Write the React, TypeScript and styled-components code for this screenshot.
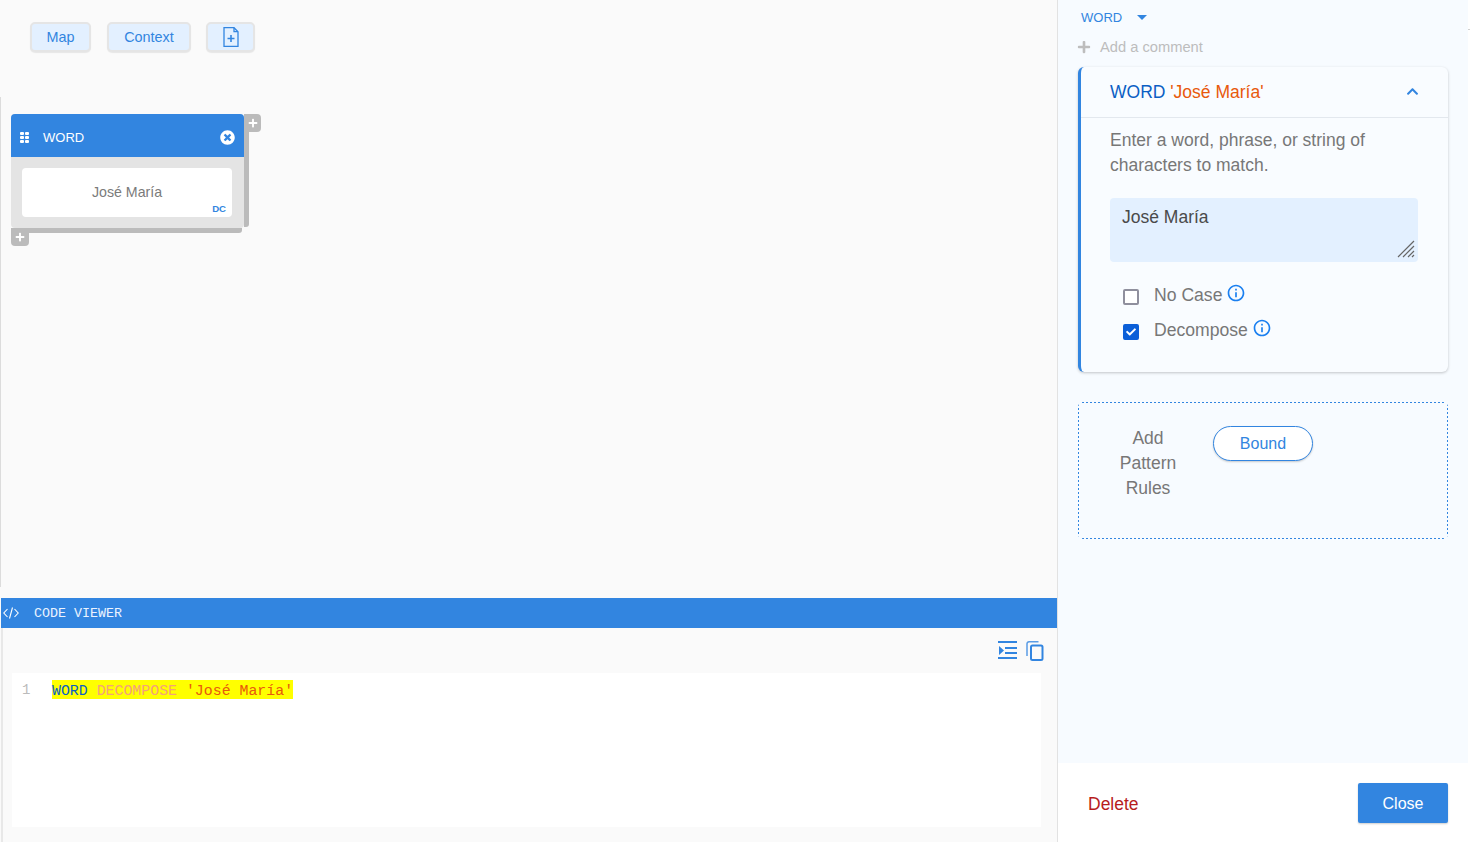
import React, { ReactElement } from 'react'
import styled, { createGlobalStyle } from 'styled-components'
import { FaTimesCircle, FaPlus, FaChevronUp, FaCheck } from 'react-icons/fa'
import { MdInfoOutline } from 'react-icons/md'

const blue = '#3285e0'

const GlobalStyle = createGlobalStyle`
    html, body {
        margin: 0;
        height: 100%;
        background: #ffffff;
        overflow: hidden;
    }
    body {
        font-family: "Liberation Sans", Arial, sans-serif;
        color: #777;
    }
`
const Page = styled.div`
    position: relative;
    display: flex;
    width: 1468px;
    height: 842px;
`
const Tick = styled.span`
    position: absolute;
    left: 1468px;
    top: 29px;
    width: 2px;
    height: 1px;
    background: #d0d0d0;
`
const Main = styled.div`
    display: flex;
    flex-direction: column;
    width: 1057px;
    flex: none;
    background: #fafafa;
`
const Toolbar = styled.div`
    display: flex;
    height: 97px;
    padding: 22px 0 0 30px;
    box-sizing: border-box;
    flex: none;
`
const ToolButton = styled.button<{ $w: number; $gap: number }>`
    display: flex;
    align-items: center;
    justify-content: center;
    width: ${p => p.$w}px;
    height: 30px;
    margin-right: ${p => p.$gap}px;
    padding: 0;
    box-sizing: border-box;
    border: 2px solid #e5e5e5;
    border-radius: 5px;
    background: #e3f0ff;
    color: ${blue};
    font: 14.4px "Liberation Sans", Arial, sans-serif;
    box-shadow: 0 1px 1px rgba(0, 0, 0, 0.08);
`
const Canvas = styled.div`
    position: relative;
    flex: 1;
    border-left: 1px solid #dcdcdc;
    margin-bottom: 11px;
`
const Node = styled.div`
    position: absolute;
    left: 10px;
    top: 17px;
    width: 233px;
    height: 114px;
    background: #e4e4e4;
    border-radius: 4px;
    &::before {
        content: '';
        position: absolute;
        left: 100%;
        top: 0;
        width: 5px;
        height: 113px;
        background: #bbbbbb;
        border-radius: 0 0 3px 0;
    }
    &::after {
        content: '';
        position: absolute;
        left: 0;
        right: 2px;
        top: 100%;
        height: 5px;
        background: #bbbbbb;
        border-radius: 0 0 3px 0;
    }
`
const NodeHead = styled.div`
    display: flex;
    align-items: center;
    height: 43px;
    padding: 3px 9px 0 9px;
    box-sizing: border-box;
    background: ${blue};
    border-radius: 4px 4px 0 0;
    color: #fff;
    font-size: 13px;
`
const Grip = styled.span`
    display: grid;
    grid-template-columns: 4px 4px;
    grid-auto-rows: 3px;
    gap: 1px 1px;
    margin-right: 14px;
    i {
        background: #fff;
        border-radius: 1px;
    }
`
const NodeTitle = styled.span`
    flex: 1;
`
const NodeBody = styled.div`
    position: relative;
    display: flex;
    align-items: center;
    justify-content: center;
    height: 49px;
    margin: 11px 12px 0 11px;
    padding-bottom: 2px;
    box-sizing: border-box;
    background: #fff;
    border-radius: 4px;
    font-size: 14.2px;
    color: #7b7b7b;
`
const Flag = styled.span`
    position: absolute;
    right: 6px;
    bottom: 3px;
    font-size: 9.6px;
    font-weight: 700;
    color: ${blue};
`
const AddTab = styled.span<{ $side: 'right' | 'bottom' }>`
    position: absolute;
    z-index: 1;
    display: flex;
    align-items: center;
    justify-content: center;
    width: 18px;
    height: 18px;
    background: #bbbbbb;
    color: #fff;
    font-size: 10px;
    ${p => p.$side === 'right'
        ? 'left: 233px; top: 0; width: 17px; border-radius: 0 4px 4px 0;'
        : 'left: 0; top: 114px; border-radius: 0 0 4px 4px;'}
`
const ViewerBar = styled.div`
    display: flex;
    align-items: center;
    flex: none;
    height: 30px;
    margin-left: 1px;
    padding-left: 2px;
    background: ${blue};
    color: #eaf3ff;
    font: 13.33px "Liberation Mono", monospace;
`
const ViewerTitle = styled.span`
    margin-left: 15px;
`
const ViewerBody = styled.div`
    flex: none;
    height: 214px;
    display: flex;
    flex-direction: column;
    box-sizing: border-box;
    margin-left: 1px;
    border-left: 2px solid #e8e8e8;
    padding: 0 16px 15px 9px;
`
const ViewerTools = styled.div`
    display: flex;
    justify-content: flex-end;
    align-items: flex-start;
    gap: 9px;
    flex: none;
    height: 45px;
    padding: 13px 0 0;
    box-sizing: border-box;
    margin-right: -3px;
    svg {
        display: block;
    }
`
const Editor = styled.div`
    flex: 1;
    display: flex;
    padding-top: 7px;
    background: #fff;
    font: 14.88px/22px "Liberation Mono", monospace;
`
const LineNo = styled.span`
    width: 40px;
    padding-left: 10px;
    box-sizing: border-box;
    color: #bbb;
    font-size: 14px;
    line-height: 20px;
`
const Code = styled.div`
    height: 19px;
    background: #ffff00;
`
const Kw = styled.span<{ $c: string }>`
    color: ${p => p.$c};
`
const Side = styled.div`
    display: flex;
    flex-direction: column;
    flex: 1;
    border-left: 1px solid #e2e2e2;
`
const SideScroll = styled.div`
    flex: 1;
    padding: 0 20px;
    background: #f7fbff;
`
const KindRow = styled.div`
    display: flex;
    align-items: center;
    height: 34px;
    padding-left: 3px;
    color: ${blue};
    font-size: 13px;
`
const Caret = styled.span`
    width: 0;
    height: 0;
    margin-left: 15px;
    border-left: 5px solid transparent;
    border-right: 5px solid transparent;
    border-top: 5px solid ${blue};
`
const CommentRow = styled.div`
    display: flex;
    align-items: center;
    gap: 9px;
    height: 26px;
    margin-left: -1px;
    color: #bdbdbd;
    font-size: 14.7px;
`
const Card = styled.div`
    height: 305px;
    margin-top: 7px;
    box-sizing: border-box;
    border-left: 3px solid ${blue};
    border-radius: 6px;
    background: #f9fcff;
    box-shadow: 0 1px 3px rgba(0, 0, 0, 0.22);
`
const CardHead = styled.div`
    display: flex;
    align-items: center;
    justify-content: space-between;
    height: 50px;
    padding: 0 29px;
    border-bottom: 1px solid #e3e8ee;
    font-size: 17.5px;
    color: ${blue};
    svg {
        margin-top: -2px;
    }
`
const Hint = styled.p`
    margin: 10px 40px 0 29px;
    font-size: 17.5px;
    line-height: 25px;
    color: #777;
`
const InputBox = styled.div`
    position: relative;
    height: 64px;
    margin: 20px 30px 0 29px;
    padding: 9px 12px 0;
    box-sizing: border-box;
    background: #e3f0ff;
    border-radius: 4px;
    font-size: 17.5px;
    line-height: 21px;
    color: #4a4a4a;
`
const Grabber = styled.svg`
    position: absolute;
    right: 3px;
    bottom: 4px;
`
const CheckRow = styled.label`
    display: flex;
    align-items: flex-start;
    height: 35px;
    margin-left: 42px;
    font-size: 17.6px;
    color: #777;
    &:first-of-type {
        margin-top: 20px;
    }
`
const Box = styled.span<{ $on?: boolean }>`
    display: flex;
    align-items: center;
    justify-content: center;
    width: 16px;
    height: 16px;
    margin: 7px 15px 0 0;
    box-sizing: border-box;
    border-radius: 2px;
    border: 2px solid ${p => (p.$on ? '#0b5fd8' : '#8f8f9d')};
    background: ${p => (p.$on ? '#0b5fd8' : '#fff')};
    color: #fff;
    font-size: 10px;
`
const CheckText = styled.span`
    padding-top: 1px;
    line-height: 25px;
`
const Info = styled.span`
    margin-left: 4px;
    color: #1a7ff0;
    font-size: 20px;
    line-height: 0;
    svg {
        margin-top: 1px;
    }
`
const DropZone = styled.div`
    display: flex;
    align-items: flex-start;
    height: 137px;
    margin-top: 30px;
    box-sizing: border-box;
    border-radius: 5px;
    padding: 24px 0 0 34px;
    background-image:
        linear-gradient(90deg, ${blue} 50%, transparent 50%),
        linear-gradient(90deg, ${blue} 50%, transparent 50%),
        linear-gradient(0deg, ${blue} 50%, transparent 50%),
        linear-gradient(0deg, ${blue} 50%, transparent 50%);
    background-size: 4px 1px, 4px 1px, 1px 4px, 1px 4px;
    background-repeat: repeat-x, repeat-x, repeat-y, repeat-y;
    background-position: 0 0, 0 100%, 0 0, 100% 0;
`
const RuleLabel = styled.div`
    width: 72px;
    text-align: center;
    font-size: 17.5px;
    line-height: 25px;
    color: #777;
`
const RuleButton = styled.button`
    width: 100px;
    height: 35px;
    margin-left: 29px;
    padding: 1px 0 0;
    border: 1px solid ${blue};
    border-radius: 18px;
    background: #fff;
    color: ${blue};
    font: 16px "Liberation Sans", Arial, sans-serif;
    box-shadow: 0 1px 2px rgba(0, 0, 0, 0.2);
`
const Footer = styled.div`
    display: flex;
    align-items: center;
    justify-content: space-between;
    flex: none;
    height: 79px;
    padding: 0 20px 0 30px;
    background: #fff;
`
const DeleteLink = styled.span`
    padding-top: 3px;
    color: #b71c1c;
    font-size: 17.5px;
`
const CloseButton = styled.button`
    width: 90px;
    height: 40px;
    padding: 2px 0 0;
    border: 0;
    border-radius: 2px;
    background: ${blue};
    color: #fff;
    font: 16px "Liberation Sans", Arial, sans-serif;
    box-shadow: 0 1px 2px rgba(0, 0, 0, 0.2);
`

function NewFileIcon(): ReactElement {
    return (
        <svg width="16" height="20" viewBox="0 0 16 20" fill="none" stroke={blue} strokeWidth="1.3">
            <path d="M1 .7h10l4 4v14.6H1z" />
            <path d="M11 .7v4h4" />
            <path d="M8 8v7M4.5 11.5h7" strokeWidth="1.6" />
        </svg>
    )
}

function CodeIcon(): ReactElement {
    return (
        <svg width="16" height="12" viewBox="0 0 16 12" fill="none" stroke="#fff" strokeWidth="1.1">
            <path d="M4.5 2 .8 6l3.7 4M11.5 2l3.7 4-3.7 4M9.5 .5l-3 11" />
        </svg>
    )
}

function IndentIcon(): ReactElement {
    return (
        <svg width="19" height="18" viewBox="0 0 19 18" fill={blue}>
            <rect x="0" y="0" width="19" height="2" />
            <rect x="7" y="6" width="12" height="2" />
            <rect x="7" y="11" width="12" height="2" />
            <rect x="0" y="16" width="19" height="2" />
            <path d="M1 5l5 4.5L1 14z" />
        </svg>
    )
}

function CopyIcon(): ReactElement {
    return (
        <svg width="18" height="20" viewBox="0 0 18 20" fill="none" stroke={blue}>
            <path d="M12.5 .8H3A2 2 0 0 0 1 2.8V15" strokeWidth="1.5" opacity="0.8" />
            <rect x="5" y="4.5" width="11.5" height="14.5" rx="1.5" strokeWidth="2" />
        </svg>
    )
}

export default function App(): ReactElement {
    return (
        <Page>
            <GlobalStyle />
            <Tick />
            <Main>
                <Toolbar>
                    <ToolButton $w={61} $gap={16}>Map</ToolButton>
                    <ToolButton $w={84} $gap={15}>Context</ToolButton>
                    <ToolButton $w={49} $gap={0}><NewFileIcon /></ToolButton>
                </Toolbar>
                <Canvas>
                    <Node>
                        <NodeHead>
                            <Grip><i /><i /><i /><i /><i /><i /></Grip>
                            <NodeTitle>WORD</NodeTitle>
                            <FaTimesCircle size={15} />
                        </NodeHead>
                        <NodeBody>
                            José María
                            <Flag>DC</Flag>
                        </NodeBody>
                        <AddTab $side="right"><FaPlus /></AddTab>
                        <AddTab $side="bottom"><FaPlus /></AddTab>
                    </Node>
                </Canvas>
                <ViewerBar>
                    <CodeIcon />
                    <ViewerTitle>CODE VIEWER</ViewerTitle>
                </ViewerBar>
                <ViewerBody>
                    <ViewerTools>
                        <IndentIcon />
                        <CopyIcon />
                    </ViewerTools>
                    <Editor>
                        <LineNo>1</LineNo>
                        <Code>
                            <Kw $c="#0b5fc4">WORD</Kw>{' '}
                            <Kw $c="#f5a27a">DECOMPOSE</Kw>{' '}
                            <Kw $c="#e8590c">'José María'</Kw>
                        </Code>
                    </Editor>
                </ViewerBody>
            </Main>
            <Side>
                <SideScroll>
                    <KindRow>WORD<Caret /></KindRow>
                    <CommentRow><FaPlus size={14} />Add a comment</CommentRow>
                    <Card>
                        <CardHead>
                            <span>
                                <Kw $c="#0b5fc4">WORD</Kw> <Kw $c="#e8590c">'José María'</Kw>
                            </span>
                            <FaChevronUp size={13} />
                        </CardHead>
                        <Hint>Enter a word, phrase, or string of characters to match.</Hint>
                        <InputBox>
                            José María
                            <Grabber width="18" height="18" viewBox="0 0 18 18" stroke="#666" strokeWidth="1.2">
                                <path d="M1 17 17 1M6 17 17 6M11 17l6-6M15 17l2-2" />
                            </Grabber>
                        </InputBox>
                        <CheckRow>
                            <Box />
                            <CheckText>No Case</CheckText>
                            <Info><MdInfoOutline /></Info>
                        </CheckRow>
                        <CheckRow>
                            <Box $on><FaCheck /></Box>
                            <CheckText>Decompose</CheckText>
                            <Info><MdInfoOutline /></Info>
                        </CheckRow>
                    </Card>
                    <DropZone>
                        <RuleLabel>Add Pattern Rules</RuleLabel>
                        <RuleButton>Bound</RuleButton>
                    </DropZone>
                </SideScroll>
                <Footer>
                    <DeleteLink>Delete</DeleteLink>
                    <CloseButton>Close</CloseButton>
                </Footer>
            </Side>
        </Page>
    )
}
